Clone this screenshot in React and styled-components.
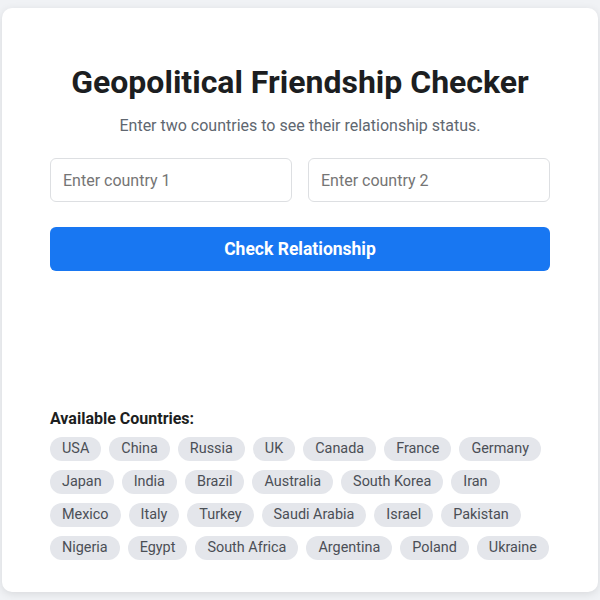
import React, { useState } from "react";
import styled, { createGlobalStyle } from "styled-components";

const GlobalStyle = createGlobalStyle`
  html, body {
    margin: 0;
    padding: 0;
    background: #f0f2f5;
    font-family: Roboto, "Liberation Sans", Arial, sans-serif;
  }
  * { box-sizing: border-box; }
`;

const Page = styled.div`
  padding: 8px 2px;
  min-height: 600px;
`;

const Card = styled.div`
  background: #fff;
  border-radius: 10px;
  box-shadow: 0 2px 8px rgba(0, 0, 0, 0.1);
  padding: 56px 48px 32px;
  height: 584px;
  display: flex;
  flex-direction: column;
`;

const Title = styled.h1`
  margin: 0;
  text-align: center;
  font-size: 32px;
  font-weight: 700;
  color: #1c1e21;
  line-height: 36px;
`;

const Subtitle = styled.p`
  margin: 16px 0 0;
  text-align: center;
  font-size: 16px;
  color: #606770;
  line-height: 20px;
`;

const InputRow = styled.div`
  display: grid;
  grid-template-columns: 1fr 1fr;
  gap: 16px;
  margin-top: 22px;
`;

const Input = styled.input`
  height: 44px;
  padding: 0 12px;
  border: 1px solid #dddfe2;
  border-radius: 6px;
  font-family: inherit;
  font-size: 16px;
  color: #1c1e21;
  outline: none;
  &::placeholder { color: #757575; }
`;

const Button = styled.button`
  margin-top: 25px;
  height: 44px;
  border: none;
  border-radius: 6px;
  background: #1877f2;
  color: #fff;
  font-family: inherit;
  font-size: 17.5px;
  font-weight: 700;
  cursor: pointer;
`;

const Countries = styled.div`
  margin-top: auto;
`;

const Label = styled.h3`
  margin: 0 0 8px;
  font-size: 16px;
  font-weight: 700;
  color: #1c1e21;
  line-height: 20px;
`;

const ChipList = styled.div`
  display: flex;
  flex-wrap: wrap;
  gap: 9px 8px;
`;

const Chip = styled.span`
  background: #e4e6eb;
  color: #4b4f56;
  border-radius: 12px;
  padding: 4px 12px;
  font-size: 14.4px;
  line-height: 16px;
  cursor: pointer;
`;

const countries = [
  "USA", "China", "Russia", "UK", "Canada", "France", "Germany",
  "Japan", "India", "Brazil", "Australia", "South Korea", "Iran",
  "Mexico", "Italy", "Turkey", "Saudi Arabia", "Israel", "Pakistan",
  "Nigeria", "Egypt", "South Africa", "Argentina", "Poland", "Ukraine",
];

const App = () => {
  const [c1, setC1] = useState("");
  const [c2, setC2] = useState("");
  return (
    <>
      <GlobalStyle />
      <Page>
        <Card>
          <Title>Geopolitical Friendship Checker</Title>
          <Subtitle>Enter two countries to see their relationship status.</Subtitle>
          <InputRow>
            <Input placeholder="Enter country 1" value={c1} onChange={(e) => setC1(e.target.value)} />
            <Input placeholder="Enter country 2" value={c2} onChange={(e) => setC2(e.target.value)} />
          </InputRow>
          <Button>Check Relationship</Button>
          <Countries>
            <Label>Available Countries:</Label>
            <ChipList>
              {countries.map((c) => (
                <Chip key={c}>{c}</Chip>
              ))}
            </ChipList>
          </Countries>
        </Card>
      </Page>
    </>
  );
};

export default App;
